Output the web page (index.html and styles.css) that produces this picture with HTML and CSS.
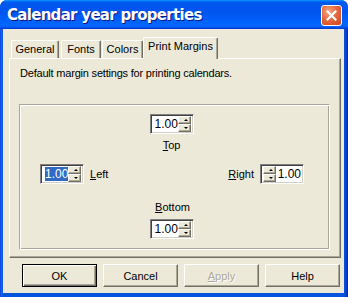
FILE: index.html
```html
<!DOCTYPE html>
<html lang="en">
<head>
    <meta charset="UTF-8">
    <title>Calendar year properties</title>
    <link rel="stylesheet" href="styles.css">
</head>
<body>
    <div class="window">
        <div class="titlebar">
            <span class="title">Calendar year properties</span>
            <button class="close" title="Close">
                <svg width="11" height="11" viewBox="0 0 11 11">
                    <path d="M1.5 1.5 L9.5 9.5 M9.5 1.5 L1.5 9.5" stroke="#fff" stroke-width="2.2" stroke-linecap="square"/>
                </svg>
            </button>
        </div>

        <div class="client">
            <div class="tabs">
                <div class="tab tab-general">General</div>
                <div class="tab tab-fonts">Fonts</div>
                <div class="tab tab-colors">Colors</div>
                <div class="tab active">Print Margins</div>
            </div>

            <div class="panel">
                <p class="desc">Default margin settings for printing calendars.</p>

                <div class="group">
                    <div class="row center">
                        <div class="spin">
                            <span class="value">1.00</span>
                            <span class="arrows"><i class="up"></i><i class="down"></i></span>
                        </div>
                        <label class="caption top-caption"><u>T</u>op</label>
                    </div>

                    <div class="row sides">
                        <div class="field">
                            <div class="spin">
                                <span class="value"><span class="selected">1.00</span></span>
                                <span class="arrows"><i class="up"></i><i class="down"></i></span>
                            </div>
                            <label class="caption"><u>L</u>eft</label>
                        </div>
                        <div class="field">
                            <label class="caption"><u>R</u>ight</label>
                            <div class="spin">
                                <span class="arrows"><i class="up"></i><i class="down"></i></span>
                                <span class="value">1.00</span>
                            </div>
                        </div>
                    </div>

                    <div class="row center">
                        <label class="caption bottom-caption"><u>B</u>ottom</label>
                        <div class="spin">
                            <span class="value">1.00</span>
                            <span class="arrows"><i class="up"></i><i class="down"></i></span>
                        </div>
                    </div>
                </div>
            </div>

            <div class="buttons">
                <button class="btn default">OK</button>
                <button class="btn">Cancel</button>
                <button class="btn disabled"><u>A</u>pply</button>
                <button class="btn">Help</button>
            </div>
        </div>
    </div>
</body>
</html>
```

FILE: styles.css
```css
body {
    margin: 0;
    width: 348px;
    height: 297px;
    overflow: hidden;
    background: #fff;
    font-family: "Liberation Sans", Arial, sans-serif;
    font-size: 11px;
    color: #000;
}
.window {
    width: 348px;
    height: 297px;
    box-sizing: border-box;
    display: flex;
    flex-direction: column;
    background: linear-gradient(90deg, #0831d9 0, #166aee 1px, #0855dd 3px, #0855dd 344px, #0a46cf 346px, #001ea0 348px);
    border-radius: 7px 7px 0 0;
}
.titlebar {
    height: 29px;
    flex: none;
    display: flex;
    align-items: center;
    padding: 0 6px 0 7px;
    border-radius: 7px 7px 0 0;
    background: linear-gradient(#0997ff 0, #0058ee 8%, #0054ee 40%, #0066ff 85%, #0060fc 93%, #003dd7 97%, #003dd7 100%);
}
.title {
    flex: 1;
    color: #fff;
    font-family: "DejaVu Sans", sans-serif;
    font-weight: bold;
    font-size: 15px;
    letter-spacing: -0.7px;
    text-shadow: 1px 1px #0a1883;
}
.close {
    width: 21px;
    height: 21px;
    padding: 0;
    margin-top: 1px;
    border: 1px solid #fff;
    border-radius: 3px;
    background: radial-gradient(circle at 35% 30%, #f5a883 0, #e6683f 45%, #cc431e 100%);
    display: flex;
    align-items: center;
    justify-content: center;
}
.client {
    flex: 1;
    margin: 0 4px 4px 3px;
    background: #ece9d8;
    display: flex;
    flex-direction: column;
}
.tabs {
    height: 21px;
    margin-top: 8px;
    padding-left: 8px;
    display: flex;
    align-items: flex-end;
    position: relative;
    z-index: 1;
}
.tab {
    height: 18px;
    box-sizing: border-box;
    border: 1px solid #fff;
    border-right-color: #716f64;
    border-bottom: none;
    border-radius: 2px 2px 0 0;
    box-shadow: inset -1px 0 #aca899;
    line-height: 16px;
    text-align: center;
    background: #ece9d8;
}
.tab-general { width: 48px; }
.tab-fonts { width: 40px; margin-left: 2px; }
.tab-colors { width: 41px; margin-left: 1px; }
.tab.active {
    width: 75px;
    height: 22px;
    line-height: 16px;
    margin-bottom: -1px;
}
.panel {
    height: 200px;
    box-sizing: border-box;
    margin: 0 3px 0 6px;
    border: 1px solid #fff;
    border-right-color: #716f64;
    border-bottom-color: #716f64;
    box-shadow: inset -1px -1px #aca899;
    padding: 0 0 0 10px;
}
.desc {
    margin: 8px 0 0 0;
    line-height: 13px;
    letter-spacing: -0.2px;
}
.group {
    width: 311px;
    height: 146px;
    box-sizing: border-box;
    margin: 24px 0 0 -1px;
    border: 1px solid;
    border-color: #aca899 #fff #fff #aca899;
    box-shadow: inset 1px 1px #fff, inset -1px -1px #aca899;
    display: flex;
    flex-direction: column;
    padding: 9px 0 0 0;
}
.row.center {
    display: flex;
    flex-direction: column;
    align-items: center;
    padding-right: 6px;
}
.caption {
    line-height: 13px;
}
.top-caption { margin-top: 5px; }
.bottom-caption { margin-top: 17px; margin-bottom: 5px; padding-left: 2px; }
.row.sides {
    display: flex;
    justify-content: space-between;
    margin-top: 12px;
    padding: 0 25px 0 20px;
}
.field {
    display: flex;
    align-items: center;
    gap: 6px;
}
.spin {
    width: 44px;
    height: 20px;
    box-sizing: border-box;
    display: flex;
    align-items: center;
    background: #fff;
    border: 1px solid;
    border-color: #808080 #fff #fff #808080;
    box-shadow: inset 1px 1px #404040, inset -1px -1px #d4d0c8;
    padding: 2px;
    font-size: 12px;
}
.value {
    flex: 1;
    padding-left: 2px;
    line-height: 14px;
}
.selected {
    background: #316ac5;
    color: #fff;
}
.arrows {
    width: 16px;
    height: 16px;
    display: flex;
    flex-direction: column;
}
.arrows i {
    flex: 1;
    position: relative;
    background: #ece9d8;
    border: 1px solid;
    border-color: #fff #716f64 #716f64 #fff;
    box-shadow: inset -1px -1px #aca899;
}
.arrows i::after {
    content: "";
    position: absolute;
    left: 5px;
    border-left: 2px solid transparent;
    border-right: 2px solid transparent;
}
.arrows .up::after {
    top: 2px;
    border-bottom: 2px solid #000;
}
.arrows .down::after {
    top: 2px;
    border-top: 2px solid #000;
}
.buttons {
    display: flex;
    gap: 6px;
    margin-top: 6px;
    padding-left: 19px;
}
.btn {
    width: 75px;
    height: 23px;
    padding: 0;
    font-family: "Liberation Sans", Arial, sans-serif;
    font-size: 11px;
    color: #000;
    background: #ece9d8;
    border: 1px solid;
    border-color: #fff #716f64 #716f64 #fff;
    box-shadow: inset -1px -1px #aca899;
}
.btn.default {
    border: 1px solid #000;
    box-shadow: inset 1px 1px #fff, inset -1px -1px #716f64, inset -2px -2px #aca899;
}
.btn.disabled {
    color: #aca899;
    text-shadow: 1px 1px #fff;
}
```
